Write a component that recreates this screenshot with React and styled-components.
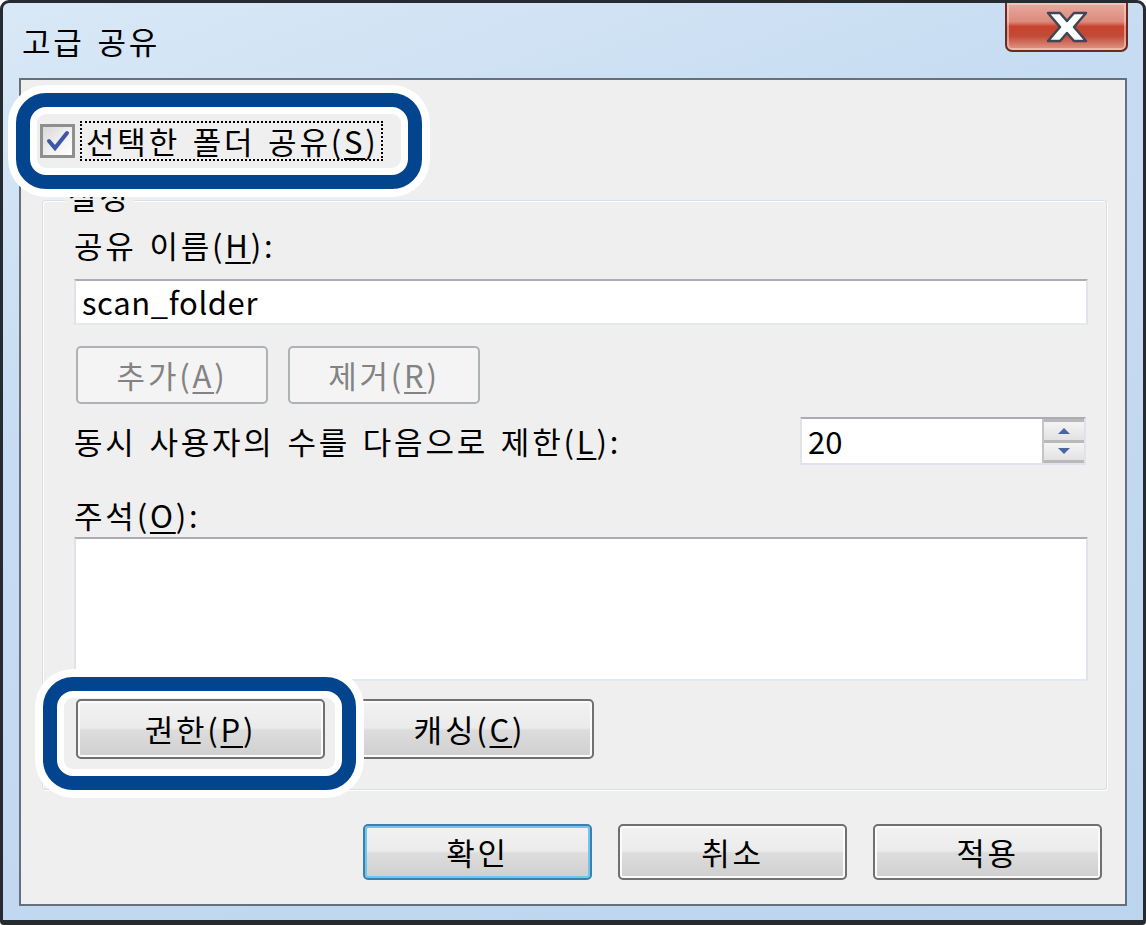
import React from 'react';
import styled, { createGlobalStyle } from 'styled-components';

const Global = createGlobalStyle`
   html, body {
      margin: 0;
      padding: 0;
      background: #ffffff;
   }
   body {
      font-family: "Noto Sans CJK KR", "Noto Sans", sans-serif;
   }
`;

const Window = styled.div`
   position: relative;
   box-sizing: border-box;
   width: 1146px;
   height: 925px;
   display: flex;
   flex-direction: column;
   padding: 0 16px 14px 16px;
   border: 3px solid #262b31;
   border-bottom-width: 5px;
   border-radius: 9px 9px 4px 4px;
   background: linear-gradient(160deg, #d9e8f6 0%, #c6dcf2 35%, #bcd5ee 100%);
   color: #000;
   font-size: 31px;
   line-height: 36px;
   letter-spacing: 2.8px;
   word-spacing: 3px;
`;

const TitleBar = styled.div`
   height: 75px;
   display: flex;
   align-items: flex-start;
   justify-content: space-between;
`;

const Title = styled.div`
   margin: 20px 0 0 3px;
   font-size: 31px;
`;

const CloseButton = styled.div`
   width: 123px;
   height: 49px;
   margin-right: -1px;
   box-sizing: border-box;
   display: flex;
   align-items: center;
   justify-content: center;
   border: 2px solid #6b2a22;
   border-top: none;
   border-radius: 0 0 7px 7px;
   background: linear-gradient(
      to bottom,
      #e9aaa0 0%,
      #dc8a7c 40%,
      #c8432e 50%,
      #c24a36 70%,
      #e29a8c 100%
   );
   box-shadow: inset 0 0 0 2px rgba(255, 220, 210, 0.5);
`;

const Client = styled.div`
   flex: 1;
   display: flex;
   flex-direction: column;
   padding: 0 18px 0 19px;
   border: 2px solid #66707d;
   background: #efefef;
`;

const CheckRow = styled.div`
   margin-top: 42px;
   height: 38px;
   display: flex;
   align-items: center;
   gap: 7px;
`;

const CheckBox = styled.div`
   width: 35px;
   height: 34px;
   box-sizing: border-box;
   border: 3px solid #8e8f8f;
   background: linear-gradient(135deg, #d8d8d8 0%, #f3f3f3 60%, #ffffff 100%);
   display: flex;
   align-items: center;
   justify-content: center;
`;

const FocusLabel = styled.span`
   padding: 0 2px 0 4px;
   outline: 2px dotted #000;
   outline-offset: 0;
   line-height: 36px;
`;

const Group = styled.div`
   position: relative;
   margin: 40px 0 0 2px;
   height: 590px;
   box-sizing: border-box;
   padding: 26px 18px 0 31px;
   border: 1px solid #d5dfe5;
   border-radius: 3px;
   box-shadow: inset 1px 1px 0 #ffffff, 1px 1px 0 #ffffff;
   display: flex;
   flex-direction: column;
`;

const Legend = styled.span`
   position: absolute;
   top: -23px;
   left: 22px;
   padding: 0 3px;
   background: #efefef;
`;

const Label = styled.div`
   margin-top: ${p => p.$top || 0}px;
   white-space: nowrap;
`;

const TextBox = styled.div`
   margin-top: ${p => p.$top || 0}px;
   height: ${p => p.$height}px;
   box-sizing: border-box;
   padding: 0 6px;
   background: #ffffff;
   border: 2px solid #e2e3ea;
   border-top-color: #abadb3;
   border-bottom-color: #e3e9ef;
   display: flex;
   align-items: center;
   letter-spacing: 0.6px;
`;

const ButtonRow = styled.div`
   margin-top: ${p => p.$top || 0}px;
   display: flex;
   gap: ${p => p.$gap || 20}px;
   padding-left: 2px;
   justify-content: ${p => (p.$right ? 'flex-end' : 'flex-start')};
   padding-right: ${p => (p.$right ? 5 : 0)}px;
`;

const Button = styled.div`
   width: ${p => p.$width}px;
   height: ${p => p.$height || 58}px;
   box-sizing: border-box;
   display: flex;
   align-items: center;
   justify-content: center;
   border: 2px solid ${p => (p.$disabled ? '#adb2b5' : p.$default ? '#3c7fb1' : '#707070')};
   border-radius: 5px;
   color: ${p => (p.$disabled ? '#838383' : '#000')};
   background: ${p =>
      p.$disabled
         ? '#f4f4f4'
         : 'linear-gradient(to bottom, #f2f2f2 0%, #ebebeb 48%, #dddddd 52%, #cfcfcf 100%)'};
   box-shadow: inset 0 0 0 2px ${p => (p.$default ? '#6fc7ee' : p.$disabled ? '#f4f4f4' : '#fbfbfb')};
`;

const LimitRow = styled.div`
   margin-top: 13px;
   display: flex;
   align-items: center;
   justify-content: space-between;
`;

const Spinner = styled.div`
   width: 286px;
   height: 48px;
   margin-right: 2px;
   box-sizing: border-box;
   display: flex;
   background: #ffffff;
   border: 2px solid #e2e3ea;
   border-top-color: #abadb3;
`;

const SpinValue = styled.div`
   flex: 1;
   padding-left: 6px;
   display: flex;
   align-items: center;
   letter-spacing: 0;
`;

const SpinButtons = styled.div`
   width: 42px;
   display: flex;
   flex-direction: column;
   gap: 3px;
   padding: 3px 0;
   box-sizing: border-box;
   background: #b9b9b9;
   border-left: 2px solid #c5c5c5;
`;

const SpinHalf = styled.div`
   flex: 1;
   display: flex;
   align-items: center;
   justify-content: center;
   background: linear-gradient(to bottom, #f4f4f4, #e2e2e2);
`;

const Highlight = styled.div`
   position: absolute;
   left: ${p => p.$x}px;
   top: ${p => p.$y}px;
   width: ${p => p.$w}px;
   height: ${p => p.$h}px;
   box-sizing: border-box;
   border: 14px solid #03448f;
   border-radius: 30px;
   box-shadow: 0 0 0 8px #ffffff, inset 0 0 0 7px #ffffff;
   pointer-events: none;
`;

const U = styled.u`
   text-decoration-thickness: 2px;
   text-underline-offset: 4px;
`;

const CloseGlyph = () => (
   <svg width="46" height="32" viewBox="0 0 46 32">
      <path
         d="M4 2 H16 L23 10 L30 2 H42 L30 16 L42 30 H30 L23 22 L16 30 H4 L16 16 Z"
         fill="#ffffff"
         stroke="#3e4657"
         strokeWidth="2.5"
         strokeLinejoin="round"
      />
   </svg>
);

const CheckMark = () => (
   <svg width="24" height="22" viewBox="0 0 24 22">
      <path d="M3 11 L9 18 L21 3" fill="none" stroke="#3d57a6" strokeWidth="4" strokeLinecap="round" />
   </svg>
);

const Arrow = ({ up }) => (
   <svg width="14" height="8" viewBox="0 0 14 8">
      <path d={up ? 'M7 1 L13 7 H1 Z' : 'M1 1 H13 L7 7 Z'} fill="#4a66a0" />
   </svg>
);

export default function App() {
   return (
      <Window>
         <Global />
         <TitleBar>
            <Title>고급 공유</Title>
            <CloseButton>
               <CloseGlyph />
            </CloseButton>
         </TitleBar>
         <Client>
            <CheckRow>
               <CheckBox>
                  <CheckMark />
               </CheckBox>
               <FocusLabel>
                  선택한 폴더 공유(<U>S</U>)
               </FocusLabel>
            </CheckRow>
            <Group>
               <Legend>설정</Legend>
               <Label>
                  공유 이름(<U>H</U>):
               </Label>
               <TextBox $top={16} $height={46}>
                  scan_folder
               </TextBox>
               <ButtonRow $top={21}>
                  <Button $width={192} $disabled>
                     추가(<U>A</U>)
                  </Button>
                  <Button $width={192} $disabled>
                     제거(<U>R</U>)
                  </Button>
               </ButtonRow>
               <LimitRow>
                  <Label>
                     동시 사용자의 수를 다음으로 제한(<U>L</U>):
                  </Label>
                  <Spinner>
                     <SpinValue>20</SpinValue>
                     <SpinButtons>
                        <SpinHalf>
                           <Arrow up />
                        </SpinHalf>
                        <SpinHalf>
                           <Arrow />
                        </SpinHalf>
                     </SpinButtons>
                  </Spinner>
               </LimitRow>
               <Label $top={32}>
                  주석(<U>O</U>):
               </Label>
               <TextBox $top={4} $height={144} />
               <ButtonRow $top={18}>
                  <Button $width={249} $height={60}>
                     권한(<U>P</U>)
                  </Button>
                  <Button $width={249} $height={60}>
                     캐싱(<U>C</U>)
                  </Button>
               </ButtonRow>
            </Group>
            <ButtonRow $top={34} $gap={26} $right>
               <Button $width={229} $height={56} $default>
                  확인
               </Button>
               <Button $width={229} $height={56}>
                  취소
               </Button>
               <Button $width={229} $height={56}>
                  적용
               </Button>
            </ButtonRow>
         </Client>
         <Highlight $x={13} $y={90} $w={406} $h={96} />
         <Highlight $x={40} $y={674} $w={313} $h={113} />
      </Window>
   );
}
